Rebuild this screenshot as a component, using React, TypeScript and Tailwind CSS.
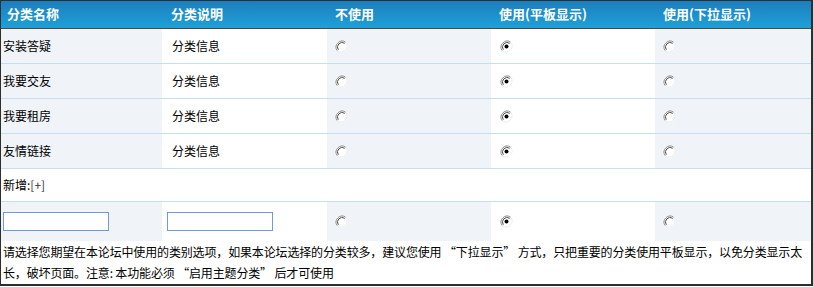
import React from "react";

const font = { fontFamily: '"Noto Sans CJK SC", "Liberation Sans", sans-serif' };

function Radio({ checked }: { checked?: boolean }) {
  return (
    <svg width="13" height="13" viewBox="0 0 13 13" className="block">
      <circle cx="6.5" cy="6.5" r="6" fill="#ffffff" />
      <path d="M10.7 2.3 A6 6 0 0 0 2.3 10.7" fill="none" stroke="#8a8a8a" strokeWidth="1" />
      <path d="M9.7 3.3 A4.6 4.6 0 0 0 3.3 9.7" fill="none" stroke="#4a4a4a" strokeWidth="1" />
      <path d="M10.7 2.3 A6 6 0 0 1 2.3 10.7" fill="none" stroke="#ebebeb" strokeWidth="1" />
      {checked && <circle cx="6.5" cy="6.5" r="2" fill="#000000" />}
    </svg>
  );
}

const rows = ["安装答疑", "我要交友", "我要租房", "友情链接"];

const grid = "grid grid-cols-[161px_165px_164px_164px_156px]";

export default function App() {
  return (
    <div className="w-[813px] h-[287px] bg-white text-[12px] text-black" style={font}>
      <div className="w-[813px] border-l border-t border-r-2 border-b-2 border-[#2e2e2e]">
        <div className={`${grid} h-[28px] border-b border-[#4d4a3c] bg-gradient-to-b from-[#1c7fbd] to-[#1fa0d8] font-bold text-white text-[13px]`}>
          <div className="pl-[6px] pt-[3px]">分类名称</div>
          <div className="pl-[9px] pt-[3px]">分类说明</div>
          <div className="pl-[8px] pt-[3px]">不使用</div>
          <div className="pl-[8px] pt-[3px]">使用(平板显示)</div>
          <div className="pl-[8px] pt-[3px]">使用(下拉显示)</div>
        </div>
        {rows.map((r) => (
          <div key={r} className={`${grid} h-[35px] border-b border-[#c6dff0]`}>
            <div className="bg-[#f0f4f8] flex items-center pl-[2px]">{r}</div>
            <div className="bg-white flex items-center pl-[10px]">分类信息</div>
            <div className="bg-[#f0f4f8] flex items-center pl-[8px]"><Radio /></div>
            <div className="bg-white flex items-center pl-[9px]"><Radio checked /></div>
            <div className="bg-[#f0f4f8] flex items-center pl-[8px]"><Radio /></div>
          </div>
        ))}
        <div className="h-[33px] border-b border-[#c6dff0] flex items-center pl-[2px] bg-white">
          新增:<span className="text-[#333]">[+]</span>
        </div>
        <div className={`${grid} h-[40px] border-b border-[#c6dff0]`}>
          <div className="bg-[#f0f4f8] flex items-center pl-[2px]">
            <input className="w-[106px] h-[19px] border border-[#6f9bd6] bg-white outline-none" />
          </div>
          <div className="bg-white flex items-center pl-[5px]">
            <input className="w-[106px] h-[19px] border border-[#6f9bd6] bg-white outline-none" />
          </div>
          <div className="bg-[#f0f4f8] flex items-center pl-[8px]"><Radio /></div>
          <div className="bg-white flex items-center pl-[9px]"><Radio checked /></div>
          <div className="bg-[#f0f4f8] flex items-center pl-[8px]"><Radio /></div>
        </div>
        <div className="h-[43px] pl-[2px] leading-[21px] bg-white overflow-hidden tracking-[-0.15px] -mt-px">
          <div className="whitespace-nowrap">
            请选择您期望在本论坛中使用的类别选项，如果本论坛选择的分类较多，建议您使用 “下拉显示” 方式，只把重要的分类使用平板显示，以免分类显示太
          </div>
          <div className="whitespace-nowrap">
            长，破坏页面。注意: 本功能必须 “启用主题分类” 后才可使用
          </div>
        </div>
      </div>
    </div>
  );
}
